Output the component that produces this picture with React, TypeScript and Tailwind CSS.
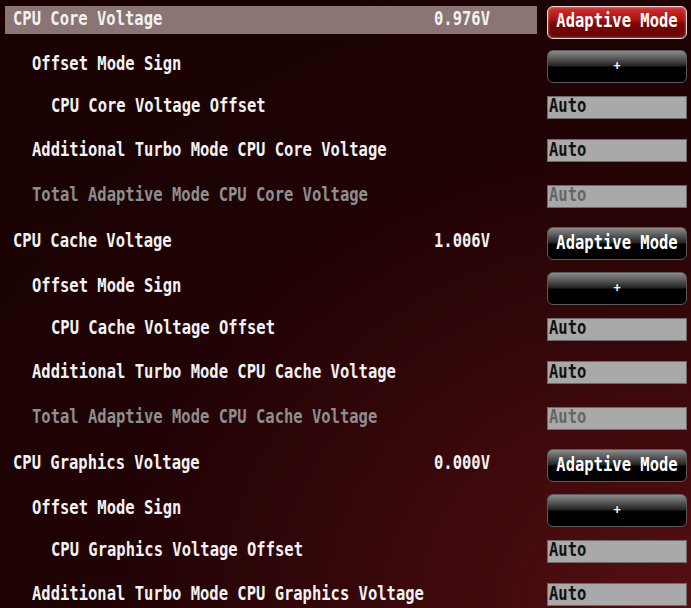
import React from "react";

type Kind = "red" | "black" | "sign" | "auto" | "autoDis";
type Row = { label: string; level: number; value?: string; kind: Kind; h: string; dim?: boolean; hl?: boolean };

const T = ({ children, className = "" }: { children: React.ReactNode; className?: string }) => (
  <span className={"inline-block scale-y-[1.22] whitespace-pre " + className}>{children}</span>
);

function Control({ kind }: { kind: Kind }) {
  if (kind === "red")
    return (
      <div className="mt-[4px] w-[140px] h-[33px] rounded-[6px] border border-[#e6d6d6] bg-[linear-gradient(to_bottom,#d23030_0%,#a81414_40%,#7c0606_55%,#650303_100%)] shadow-[inset_0_0_3px_rgba(255,255,255,0.5)] flex items-center justify-center text-white">
        <T>Adaptive Mode</T>
      </div>
    );
  if (kind === "black" || kind === "sign")
    return (
      <div className="mt-[3px] w-[140px] h-[33px] rounded-[6px] border border-[#5a5a5a] bg-[linear-gradient(to_bottom,#8c8c8c_0%,#4a4a4a_30%,#222_48%,#000_52%,#000_100%)] flex items-center justify-center text-white">
        {kind === "black" ? <T>Adaptive Mode</T> : <span className="text-[12px] font-bold leading-none">+</span>}
      </div>
    );
  return (
    <div className="w-[140px] h-[23px] border border-[#6a6a6a] bg-[#a9a9a9] flex items-center pl-[1px]">
      <T className={kind === "autoDis" ? "text-[#666]" : "text-[#111]"}>Auto</T>
    </div>
  );
}

const group = (name: string, value: string, first: boolean): Row[] => [
  { label: `CPU ${name} Voltage`, level: 0, value, kind: first ? "red" : "black", h: "h-[46px]", hl: first },
  { label: "Offset Mode Sign", level: 1, kind: "sign", h: "h-[43px]" },
  { label: `CPU ${name} Voltage Offset`, level: 2, kind: "auto", h: "h-[42px]" },
  { label: `Additional Turbo Mode CPU ${name} Voltage`, level: 1, kind: "auto", h: "h-[45px]" },
  { label: `Total Adaptive Mode CPU ${name} Voltage`, level: 1, kind: "autoDis", h: "h-[46px]", dim: true },
];

const rows: Row[] = [
  ...group("Core", "0.976V", true),
  ...group("Cache", "1.006V", false),
  ...group("Graphics", "0.000V", false).slice(0, 4),
];

const pad = ["pl-[8px]", "pl-[27px]", "pl-[46px]"];

export default function App() {
  return (
    <div
      className="w-[691px] h-[608px] overflow-hidden bg-[radial-gradient(ellipse_120%_110%_at_100%_100%,#561014_0%,#36070a_40%,#210305_70%,#1a0203_100%)] text-[15.5px] font-bold text-[#f2f2f2]"
      style={{ fontFamily: '"DejaVu Sans Mono", "Liberation Mono", monospace' }}
    >
      <div className="-mt-[3px] flex flex-col">
        {rows.map((r, i) => (
          <div key={i} className={`${r.h} flex items-center pl-[5px] pr-[4px]`}>
            <div
              className={`flex-1 h-[28px] flex items-center justify-between pr-[47px] ${pad[r.level]} ${
                r.hl ? "bg-[#8a7474]" : ""
              } ${r.dim ? "text-[#8e8e8e]" : ""}`}
            >
              <T>{r.label}</T>
              {r.value && <T>{r.value}</T>}
            </div>
            <div className="ml-[10px]">
              <Control kind={r.kind} />
            </div>
          </div>
        ))}
      </div>
    </div>
  );
}
